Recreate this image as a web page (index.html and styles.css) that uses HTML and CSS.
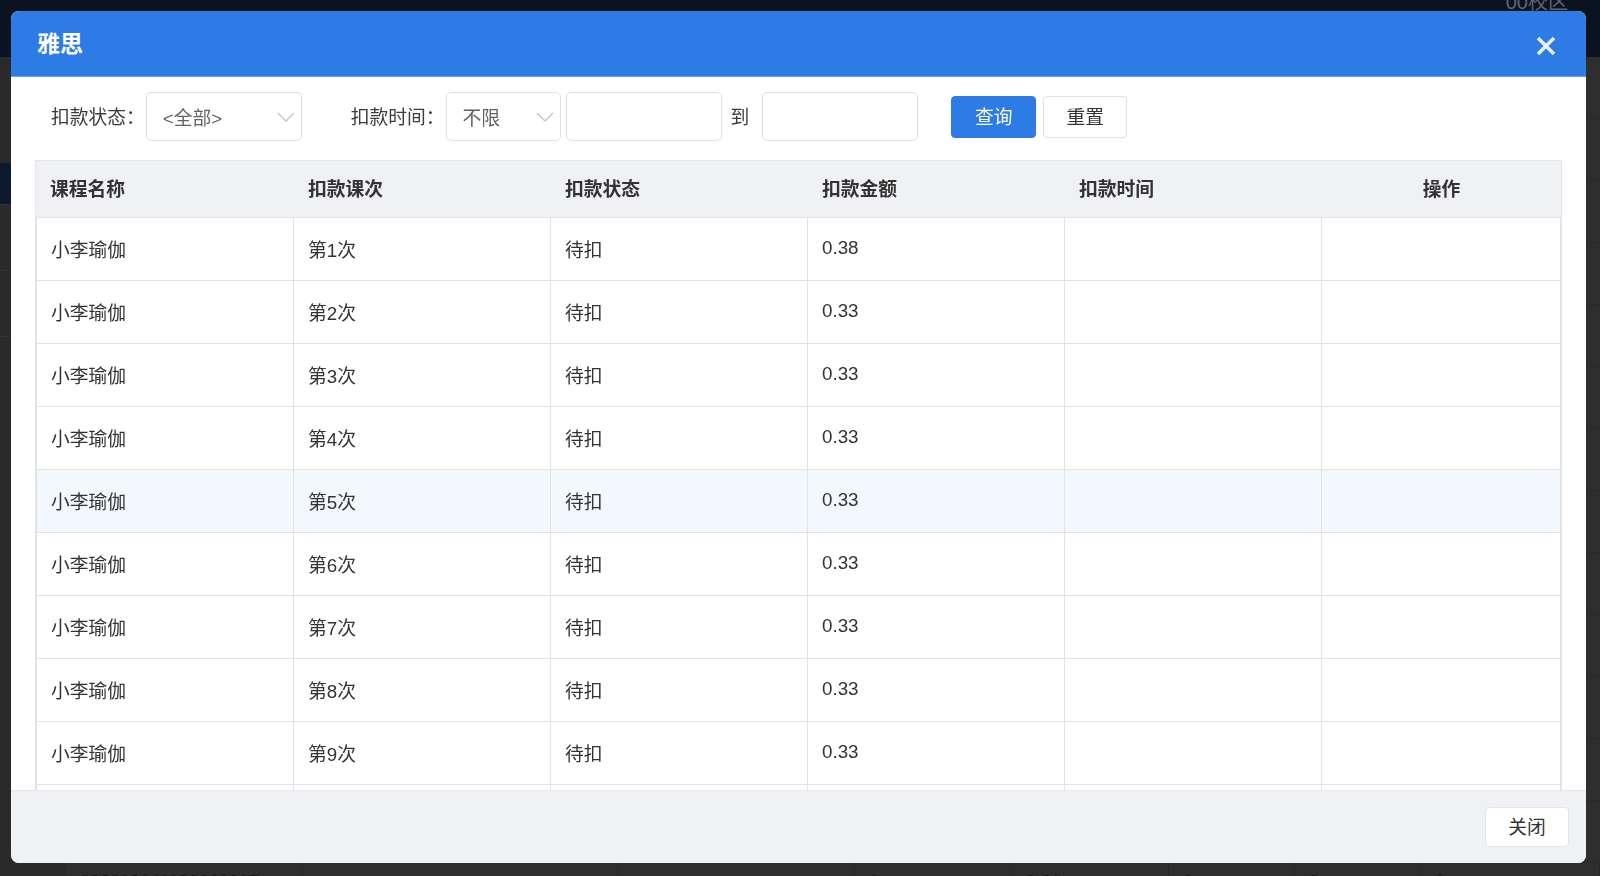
FILE: index.html
```html
<!DOCTYPE html>
<html lang="zh-CN">
<head>
    <meta charset="UTF-8">
    <meta name="viewport" content="width=device-width, initial-scale=1.0">
    <title>扣款记录</title>
    <link rel="stylesheet" href="styles.css">
</head>
<body>
    <!-- Page behind the dialog -->
    <div class="page">
        <div class="topbar">
            <span class="campus">00校区</span>
        </div>
        <div class="page-main">
            <div class="sidebar">
                <div class="side-item active"></div>
                <div class="side-item"></div>
                <div class="side-item"></div>
            </div>
            <div class="bg-list">
                <div class="bg-row"></div>
                <div class="bg-row"></div>
                <div class="bg-row"></div>
                <div class="bg-row"></div>
                <div class="bg-row"></div>
                <div class="bg-row"></div>
                <div class="bg-row"></div>
                <div class="bg-row"></div>
                <div class="bg-row"></div>
                <div class="bg-row"></div>
                <div class="bg-row"></div>
                <div class="bg-row"></div>
                <div class="bg-row"></div>
                <div class="bg-row">
                    <div class="bg-cell">202012141180200617</div>
                    <div class="bg-cell">杜xx</div>
                    <div class="bg-cell">最新</div>
                    <div class="bg-cell">1</div>
                    <div class="bg-cell">0.01</div>
                    <div class="bg-cell">0</div>
                    <div class="bg-cell">0</div>
                    <div class="bg-cell">0</div>
                </div>
            </div>
        </div>
    </div>

    <!-- Deduction dialog -->
    <div class="dialog">
        <div class="dialog-header">
            <span class="dialog-title">雅思</span>
            <span class="dialog-close">
                <svg width="22" height="22" viewBox="0 0 22 22">
                    <path d="M3 3 L19 19 M19 3 L3 19" stroke="#e8f0fd" stroke-width="3.6" fill="none"/>
                </svg>
            </span>
        </div>

        <div class="dialog-body">
            <div class="filter-bar">
                <span class="label">扣款状态：</span>
                <div class="select select-status">
                    <span>&lt;全部&gt;</span>
                    <svg class="chevron" width="18" height="10" viewBox="0 0 18 10">
                        <polyline points="1,1 9,9 17,1" stroke="#c0c4cc" stroke-width="1.3" fill="none"/>
                    </svg>
                </div>
                <span class="label label-time">扣款时间：</span>
                <div class="select select-range">
                    <span>不限</span>
                    <svg class="chevron" width="18" height="10" viewBox="0 0 18 10">
                        <polyline points="1,1 9,9 17,1" stroke="#c0c4cc" stroke-width="1.3" fill="none"/>
                    </svg>
                </div>
                <input class="date-input date-start" type="text">
                <span class="label-to">到</span>
                <input class="date-input" type="text">
                <button class="btn btn-primary">查询</button>
                <button class="btn btn-default">重置</button>
            </div>

            <div class="grid-wrap">
                <table class="grid">
                    <thead>
                        <tr>
                            <th class="col-first">课程名称</th>
                            <th>扣款课次</th>
                            <th>扣款状态</th>
                            <th>扣款金额</th>
                            <th>扣款时间</th>
                            <th class="col-action">操作</th>
                        </tr>
                    </thead>
                    <tbody>
                        <tr><td>小李瑜伽</td><td>第1次</td><td>待扣</td><td>0.38</td><td></td><td></td></tr>
                        <tr><td>小李瑜伽</td><td>第2次</td><td>待扣</td><td>0.33</td><td></td><td></td></tr>
                        <tr><td>小李瑜伽</td><td>第3次</td><td>待扣</td><td>0.33</td><td></td><td></td></tr>
                        <tr><td>小李瑜伽</td><td>第4次</td><td>待扣</td><td>0.33</td><td></td><td></td></tr>
                        <tr class="is-hover"><td>小李瑜伽</td><td>第5次</td><td>待扣</td><td>0.33</td><td></td><td></td></tr>
                        <tr><td>小李瑜伽</td><td>第6次</td><td>待扣</td><td>0.33</td><td></td><td></td></tr>
                        <tr><td>小李瑜伽</td><td>第7次</td><td>待扣</td><td>0.33</td><td></td><td></td></tr>
                        <tr><td>小李瑜伽</td><td>第8次</td><td>待扣</td><td>0.33</td><td></td><td></td></tr>
                        <tr><td>小李瑜伽</td><td>第9次</td><td>待扣</td><td>0.33</td><td></td><td></td></tr>
                        <tr><td>小李瑜伽</td><td>第10次</td><td>待扣</td><td>0.33</td><td></td><td></td></tr>
                        <tr><td>小李瑜伽</td><td>第11次</td><td>待扣</td><td>0.33</td><td></td><td></td></tr>
                    </tbody>
                </table>
            </div>
        </div>

        <div class="dialog-footer">
            <button class="btn btn-default btn-close">关闭</button>
        </div>
    </div>
</body>
</html>
```

FILE: styles.css
```css
:root {
    --primary: #2d7be5;
    --border: #dcdfe6;
    --line: #e2e2e4;
    --head-bg: #f0f1f5;
    --text: #333333;
    --muted: #606266;
}

* {
    margin: 0;
    padding: 0;
    box-sizing: border-box;
}

body {
    font-family: "Liberation Sans", "Noto Sans CJK SC", sans-serif;
    background-color: #2e2e2e;
    height: 100vh;
    overflow: hidden;
}

/* ---------- page behind the dialog ---------- */

.page {
    display: flex;
    flex-direction: column;
    height: 100vh;
    overflow: hidden;
}

.topbar {
    height: 57px;
    flex-shrink: 0;
    background-color: #0b1321;
    display: flex;
    justify-content: flex-end;
    padding-right: 32px;
}

.campus {
    color: #5f6672;
    font-size: 20px;
    line-height: 20px;
    margin-top: -8px;
}

.page-main {
    flex: 1;
    min-height: 0;
    display: flex;
    overflow: hidden;
}

.sidebar {
    width: 66px;
    flex-shrink: 0;
    background-color: #2a2a2a;
    padding-top: 106px;
}

.side-item {
    height: 42px;
    margin-bottom: 24px;
    border-bottom: 1px solid #333;
}

.side-item.active {
    background-color: #0d1a2e;
}

.bg-list {
    flex: 1;
}

.bg-row {
    height: 62px;
    display: grid;
    grid-template-columns: 237px 315px 237px 157px 157px 126px 126px 1fr;
    border-bottom: 1px solid #292929;
}

.bg-cell {
    border-right: 1px solid #272727;
    padding: 9px 0 0 14px;
    font-size: 18px;
    color: #141414;
    white-space: nowrap;
    overflow: hidden;
}

/* ---------- dialog ---------- */

.dialog {
    position: fixed;
    left: 11px;
    top: 11px;
    width: 1575px;
    height: 852px;
    background-color: #fff;
    border-radius: 8px;
    overflow: hidden;
    display: flex;
    flex-direction: column;
}

.dialog-header {
    height: 66px;
    flex-shrink: 0;
    background-color: var(--primary);
    border-bottom: 1px solid #6aa3ef;
    display: flex;
    align-items: center;
    justify-content: space-between;
    padding: 0 29px 0 26px;
}

.dialog-title {
    color: #fff;
    font-size: 23px;
    font-weight: 600;
    margin-bottom: 3px;
}

.dialog-close {
    display: flex;
    margin-top: 4px;
}

.dialog-body {
    flex: 1;
    min-height: 0;
    display: flex;
    flex-direction: column;
    padding: 0 24px;
}

/* filter row */

.filter-bar {
    display: flex;
    align-items: center;
    flex-shrink: 0;
    padding: 15px 0 19px 16px;
    font-size: 18.75px;
}

.label {
    color: #3c3c3c;
    margin-right: 1px;
    margin-bottom: 2px;
    white-space: nowrap;
}

.label-time {
    margin-left: 49px;
}

.select {
    height: 49px;
    border: 1px solid var(--border);
    border-radius: 5px;
    display: flex;
    align-items: center;
    justify-content: space-between;
    padding: 0 6px 1px 16px;
    color: var(--muted);
}

.select-status {
    width: 156px;
}

.select-range {
    width: 115px;
}

.chevron {
    margin-top: 2px;
}

.date-input {
    width: 156px;
    height: 49px;
    border: 1px solid var(--border);
    border-radius: 5px;
    outline: none;
    font-size: 18px;
}

.date-start {
    margin-left: 5px;
}

.label-to {
    color: #3c3c3c;
    margin: 0 13px 2px 9px;
}

.btn {
    height: 42px;
    border-radius: 4px;
    font-family: inherit;
    font-size: 18.75px;
    padding-bottom: 4px;
    cursor: pointer;
    margin-top: 1px;
}

.btn-primary {
    width: 85px;
    margin-left: 33px;
    background-color: var(--primary);
    border: 1px solid var(--primary);
    color: #fff;
}

.btn-default {
    width: 84px;
    margin-left: 7px;
    background-color: #fff;
    border: 1px solid var(--border);
    color: var(--text);
}

/* data grid */

.grid-wrap {
    flex: 1;
    min-height: 0;
    overflow: hidden;
    border: 1px solid #e4e6ec;
    border-bottom: none;
}

.grid {
    width: 100%;
    border-collapse: separate;
    border-spacing: 0;
    table-layout: fixed;
    font-size: 18.75px;
    color: var(--text);
}

.grid th {
    height: 57px;
    background-color: var(--head-bg);
    border-bottom: 1px solid #e4e6ec;
    text-align: left;
    font-weight: 600;
    padding: 0 0 4px 14px;
    width: 257px;
}

.grid th.col-first {
    width: 258px;
}

.grid th.col-action {
    width: auto;
    text-align: center;
    padding: 0 0 4px;
}

.grid td {
    height: 63px;
    padding: 0 0 2px 14px;
    border-right: 1px solid var(--line);
    border-bottom: 1px solid var(--line);
}

.grid td:first-child {
    border-left: 1px solid var(--line);
}

.grid tr.is-hover td {
    background-color: #f3f8fe;
}

/* footer */

.dialog-footer {
    height: 73px;
    flex-shrink: 0;
    background-color: var(--head-bg);
    border-top: 1px solid #e6e8ee;
    display: flex;
    align-items: center;
    justify-content: flex-end;
    padding-right: 17px;
}

.btn-close {
    height: 40px;
    margin: 0;
    border-color: #e2e4ea;
}
```
